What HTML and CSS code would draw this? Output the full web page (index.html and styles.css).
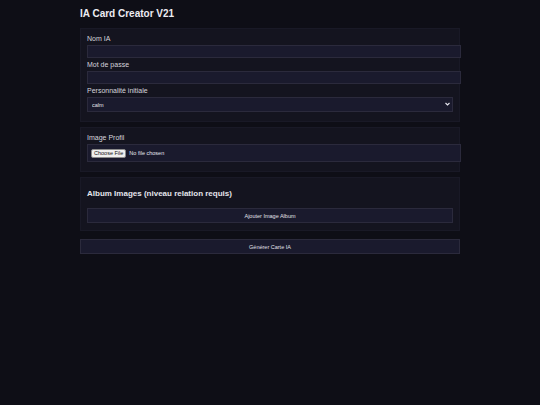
FILE: index.html
```html
<!DOCTYPE html>
<html lang="fr">
<head>
<meta charset="utf-8">
<title>IA Card Creator V21</title>
<link rel="stylesheet" href="styles.css">
</head>
<body>
<div class="app">
  <h1 class="title">IA Card Creator V21</h1>

  <section class="card">
    <label class="field-label" for="nom">Nom IA</label>
    <input class="field text" id="nom" type="text">
    <label class="field-label" for="pass">Mot de passe</label>
    <input class="field text" id="pass" type="password">
    <label class="field-label" for="perso">Personnalité initiale</label>
    <div class="select-wrap">
      <select class="field select" id="perso">
        <option>calm</option>
      </select>
      <svg class="select-arrow" width="5" height="4" viewBox="0 0 5 4" aria-hidden="true">
        <path d="M0.5 1 L2.5 3 L4.5 1" fill="none" stroke="#e8e8f0" stroke-width="1.1"/>
      </svg>
    </div>
  </section>

  <section class="card">
    <label class="field-label" for="img">Image Profil</label>
    <input class="field text file" id="img" type="file">
  </section>

  <section class="card">
    <h3 class="card-heading">Album Images (niveau relation requis)</h3>
    <button class="btn btn-inner" type="button">Ajouter Image Album</button>
  </section>

  <button class="btn btn-main" type="button">Générer Carte IA</button>
</div>
</body>
</html>
```

FILE: styles.css
```css
html, body {
  margin: 0;
  background: #0e0e16;
}
body {
  font-family: "Liberation Sans", Arial, sans-serif;
  color: #dcdce4;
}
.app {
  width: 380px;
  margin: 0 auto;
  padding-top: 8px;
}
.title {
  margin: 0 0 8px;
  font-size: 10px;
  line-height: 12px;
  font-weight: bold;
  color: #ececf2;
}
.card {
  background: #14141f;
  border: 1px solid #191926;
  padding: 6px;
  margin-bottom: 5px;
}
.field-label {
  display: block;
  font-size: 7px;
  line-height: 8px;
  margin-bottom: 2px;
  color: #d4d4dc;
}
.field {
  display: block;
  box-sizing: border-box;
  margin: 0 0 3px;
  background: #1a1a2d;
  border: 1px solid #2b2a3c;
  color: #dcdce4;
  font-family: inherit;
  font-size: 5.5px;
  outline: none;
}
.text {
  width: calc(100% + 8px);
  height: 13px;
  padding: 0 3px;
}
.select-wrap {
  position: relative;
}
.select {
  width: 100%;
  height: 15px;
  padding: 0 4px;
  appearance: none;
  -webkit-appearance: none;
  border-radius: 0;
  color: #e6e6ee;
}
.select-arrow {
  position: absolute;
  right: 3px;
  top: 5px;
}
.file {
  height: 18px;
  padding: 3px;
  font-size: 5.5px;
  line-height: 10px;
  color: #e6e6ee;
}
.file::file-selector-button {
  font-family: inherit;
  font-size: 5.5px;
  height: 9px;
  padding: 0 2px;
  margin-right: 3px;
  background: #efefef;
  color: #111;
  border: 1px solid #8a8a8a;
  border-radius: 2px;
}
.card-heading {
  margin: 5px 0 9px;
  font-size: 8px;
  line-height: 10px;
  font-weight: bold;
  color: #e4e4ec;
}
.btn {
  display: block;
  width: 100%;
  background: #1a1a2d;
  border: 1px solid #2b2a3c;
  color: #e0e0e8;
  font-family: inherit;
  font-size: 5.5px;
  padding: 0;
  cursor: pointer;
}
.btn-inner {
  height: 15px;
  margin-bottom: 1px;
}
.btn-main {
  height: 15px;
  margin-top: 8px;
}
```
